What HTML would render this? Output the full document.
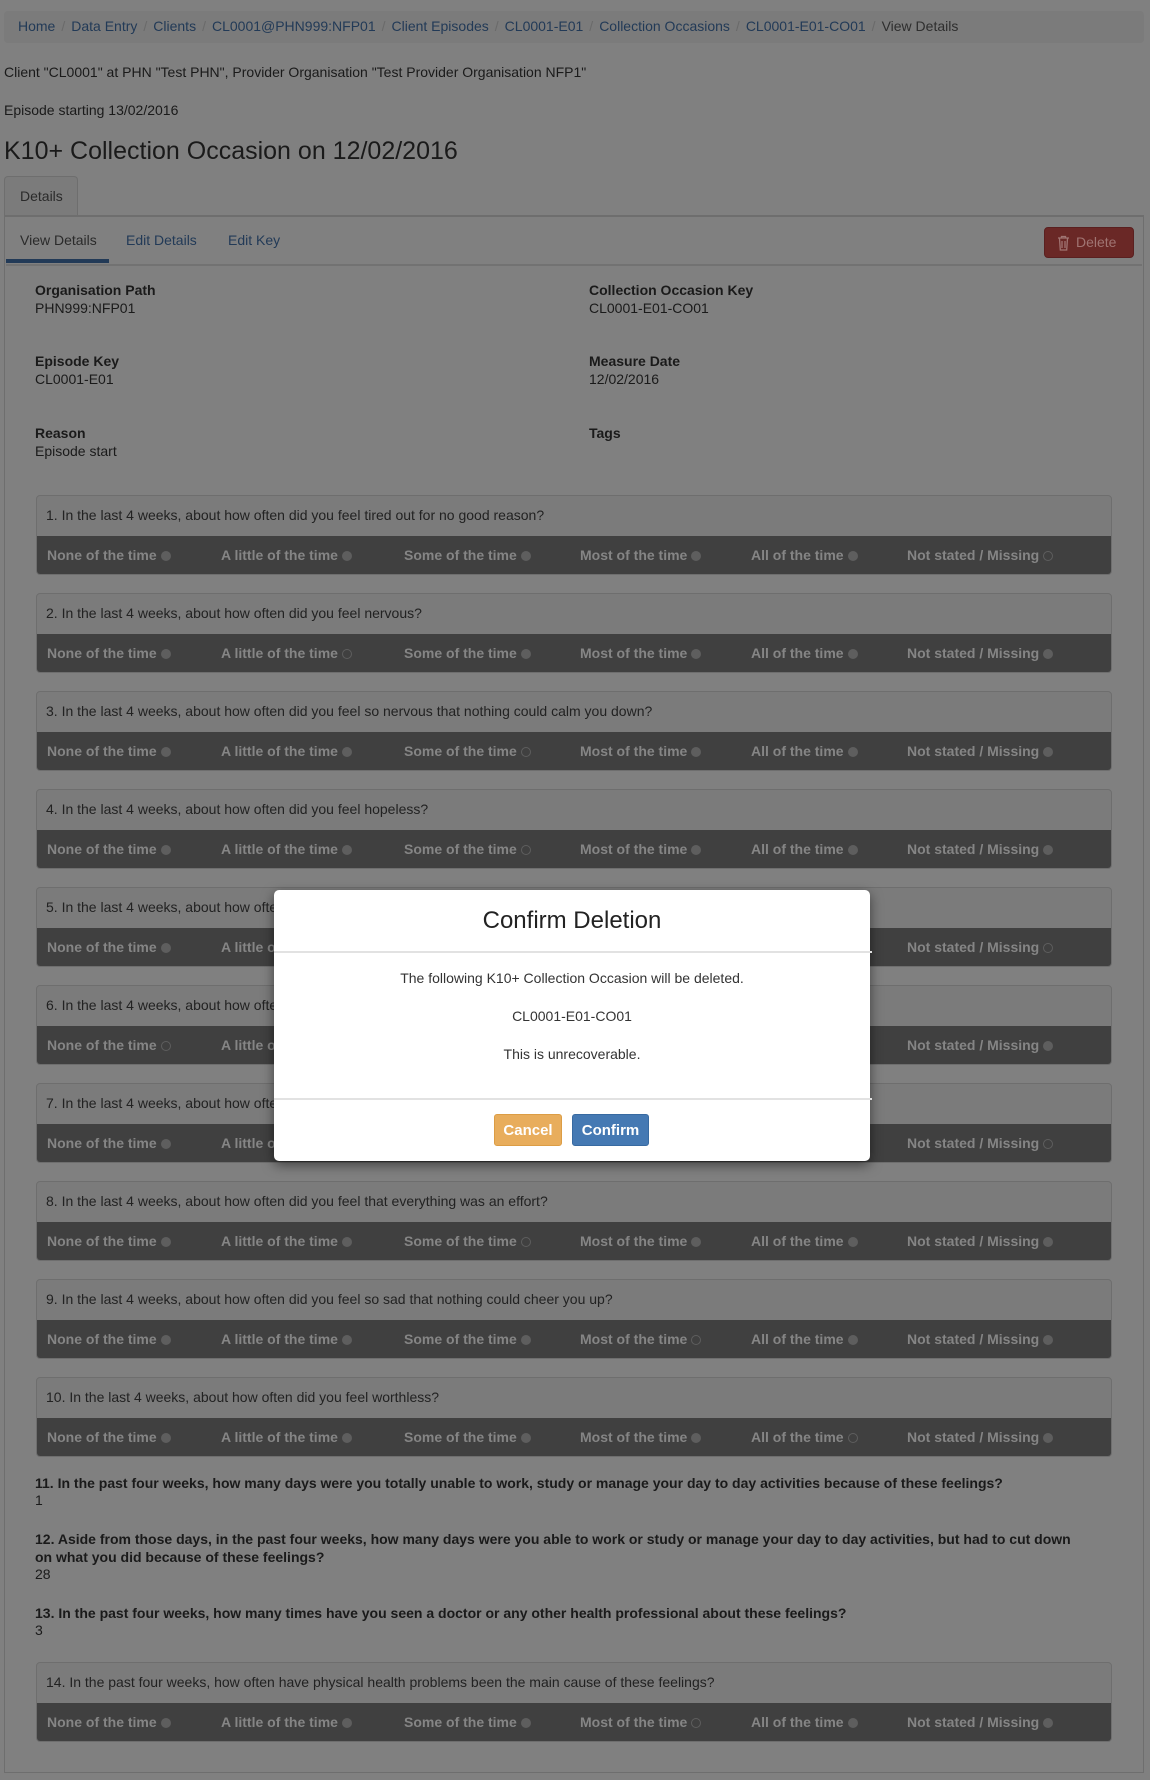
<!DOCTYPE html>
<html><head><meta charset="utf-8"><style>
*{box-sizing:border-box;margin:0;padding:0}
body{width:1150px;height:1780px;background:#808080;font-family:"Liberation Sans",sans-serif;font-size:14px;color:#1a1a1a;position:relative;overflow:hidden}
.abs{position:absolute}
.bc{left:4px;top:11px;width:1140px;height:32px;background:#7b7b7b;border-radius:4px;padding:7px 14px;font-size:14px;color:#223a57;white-space:nowrap}
.bc .s{color:#6a6a6a;margin:0 6px}
.bc .a{color:#2e2e2e}
h1{position:absolute;left:4px;top:137px;font-size:25px;font-weight:normal;color:#1a1a1a}
.tab{left:4px;top:176px;width:74px;height:40px;border:1px solid #6e6e6e;border-bottom:none;border-radius:4px 4px 0 0;background:#7b7b7b;padding:11px 0 0 15px;color:#2a2a2a}
.panel{left:4px;top:215px;width:1140px;height:1558px;border:1px solid #6e6e6e;border-top:2px solid #6e6e6e}
.sub{top:232px;font-size:14px;color:#223a57}
.ul{left:6px;top:259px;width:103px;height:4px;background:#223a57}
.line{left:6px;top:264px;width:1136px;height:2px;background:#727272}
.del{left:1044px;top:227px;width:90px;height:31px;background:#6a2826;border:1px solid #5a2020;border-radius:4px;color:#a07472;padding:6px 0 0 31px;font-size:14px}
.lab{font-weight:bold;font-size:14px}
.q{left:36px;width:1076px;height:80px;border:1px solid #6e6e6e;border-radius:4px;background:#7b7b7b;overflow:hidden}
.q .t{height:40px;padding:11px 9px;font-size:14px;color:#222}
.q .b{height:40px;background:#404040;position:relative}
.o{position:absolute;top:11px;font-weight:bold;font-size:14px;color:#858585;white-space:nowrap}
.o i{display:inline-block;width:10px;height:10px;border-radius:50%;background:#5e5e5e;margin-left:4px;vertical-align:-1px}
.o i.e{background:none;border:1px solid #5e5e5e}
.bq{left:35px;font-weight:bold;font-size:14px;width:1055px;line-height:18px}
.modal{left:274px;top:890px;width:596px;height:271px;background:#fff;border-radius:5px;box-shadow:0 4px 12px rgba(0,0,0,.5);text-align:center}
.modal h2{font-weight:normal;font-size:24px;margin-top:17px;color:#222}
.modal .hr{position:absolute;left:0;width:598px;height:2px;background:#e2e2e2}
.modal p{position:absolute;left:0;width:100%;font-size:14px;color:#333}
.btn{position:absolute;top:224px;height:32px;border-radius:3px;color:#fff;font-weight:bold;font-size:15px;padding-top:7px}
</style></head><body>
<div class="abs bc">Home<span class="s">/</span>Data Entry<span class="s">/</span>Clients<span class="s">/</span>CL0001@PHN999:NFP01<span class="s">/</span>Client Episodes<span class="s">/</span>CL0001-E01<span class="s">/</span>Collection Occasions<span class="s">/</span>CL0001-E01-CO01<span class="s">/</span><span class="a">View Details</span></div>
<div class="abs" style="left:4px;top:64px">Client "CL0001" at PHN "Test PHN", Provider Organisation "Test Provider Organisation NFP1"</div>
<div class="abs" style="left:4px;top:102px">Episode starting 13/02/2016</div>
<h1>K10+ Collection Occasion on 12/02/2016</h1>
<div class="abs tab">Details</div>
<div class="abs panel"></div>
<div class="abs sub" style="left:20px;color:#2a2a2a">View Details</div>
<div class="abs sub" style="left:126px">Edit Details</div>
<div class="abs sub" style="left:228px">Edit Key</div>
<div class="abs ul"></div><div class="abs line"></div>
<div class="abs del"><svg class="abs" style="left:12px;top:7px" width="13" height="16" viewBox="0 0 13 16"><path d="M1 3h11M4.5 3V1.5h4V3M2.5 3.5l.8 11.5h6.4l.8-11.5M5 6v7M8 6v7" stroke="#a07472" stroke-width="1.3" fill="none"/></svg>Delete</div>

<div class="abs lab" style="left:35px;top:282px">Organisation Path</div><div class="abs" style="left:35px;top:300px">PHN999:NFP01</div>
<div class="abs lab" style="left:589px;top:282px">Collection Occasion Key</div><div class="abs" style="left:589px;top:300px">CL0001-E01-CO01</div>
<div class="abs lab" style="left:35px;top:353px">Episode Key</div><div class="abs" style="left:35px;top:371px">CL0001-E01</div>
<div class="abs lab" style="left:589px;top:353px">Measure Date</div><div class="abs" style="left:589px;top:371px">12/02/2016</div>
<div class="abs lab" style="left:35px;top:425px">Reason</div><div class="abs" style="left:35px;top:443px">Episode start</div>
<div class="abs lab" style="left:589px;top:425px">Tags</div>

<div id="qs"></div>

<div class="abs bq" style="top:1474px">11. In the past four weeks, how many days were you totally unable to work, study or manage your day to day activities because of these feelings?</div>
<div class="abs" style="left:35px;top:1492px">1</div>
<div class="abs bq" style="top:1530px">12. Aside from those days, in the past four weeks, how many days were you able to work or study or manage your day to day activities, but had to cut down on what you did because of these feelings?</div>
<div class="abs" style="left:35px;top:1566px">28</div>
<div class="abs bq" style="top:1604px">13. In the past four weeks, how many times have you seen a doctor or any other health professional about these feelings?</div>
<div class="abs" style="left:35px;top:1622px">3</div>

<div class="abs modal">
<h2>Confirm Deletion</h2>
<div class="hr" style="top:61px"></div>
<p style="top:80px">The following K10+ Collection Occasion will be deleted.</p>
<p style="top:118px">CL0001-E01-CO01</p>
<p style="top:156px">This is unrecoverable.</p>
<div class="hr" style="top:208px"></div>
<div class="btn" style="left:220px;width:68px;background:#e8ad5c;border:1px solid #dc9d45">Cancel</div>
<div class="btn" style="left:298px;width:77px;background:#4579b3;border:1px solid #386aa1">Confirm</div>
</div>

<script>
var qs=["1. In the last 4 weeks, about how often did you feel tired out for no good reason?","2. In the last 4 weeks, about how often did you feel nervous?","3. In the last 4 weeks, about how often did you feel so nervous that nothing could calm you down?","4. In the last 4 weeks, about how often did you feel hopeless?","5. In the last 4 weeks, about how often did you feel restless or fidgety?","6. In the last 4 weeks, about how often did you feel so restless you could not sit still?","7. In the last 4 weeks, about how often did you feel depressed?","8. In the last 4 weeks, about how often did you feel that everything was an effort?","9. In the last 4 weeks, about how often did you feel so sad that nothing could cheer you up?","10. In the last 4 weeks, about how often did you feel worthless?","14. In the past four weeks, how often have physical health problems been the main cause of these feelings?"];
var sel=[5,1,2,2,5,0,5,2,3,4,3];
var ops=["None of the time","A little of the time","Some of the time","Most of the time","All of the time","Not stated / Missing"];
var xs=[10,184,367,543,714,870];
var h="";
qs.forEach(function(q,i){var top=i<10?495+98*i:1662;
h+='<div class="abs q" style="top:'+top+'px"><div class="t">'+q+'</div><div class="b">';
ops.forEach(function(o,j){h+='<span class="o" style="left:'+xs[j]+'px">'+o+'<i'+(sel[i]==j?' class="e"':'')+'></i></span>';});
h+='</div></div>';});
document.getElementById('qs').innerHTML=h;
</script>
</body></html>
